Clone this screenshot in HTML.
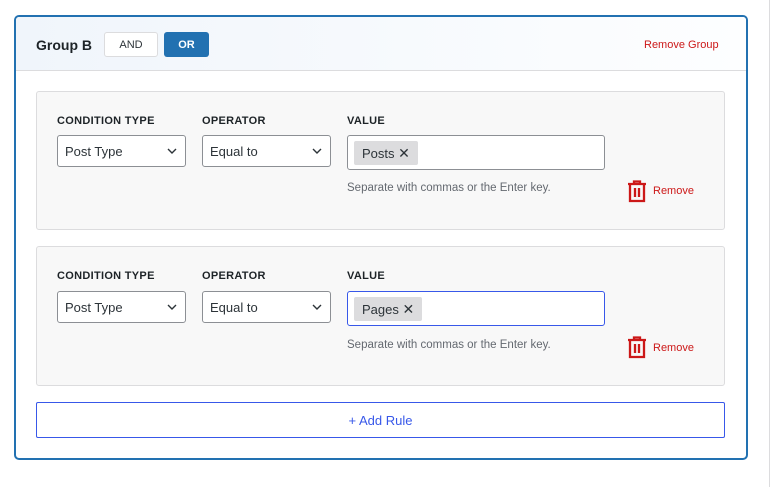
<!DOCTYPE html>
<html><head><meta charset="utf-8"><style>
*{box-sizing:border-box;margin:0;padding:0}
body{width:772px;height:487px;background:#fff;font-family:"Liberation Sans",sans-serif;position:relative;overflow:hidden}
.a{position:absolute}
.group{left:14px;top:15px;width:734px;height:445px;border:2px solid #2271b1;border-radius:5px;background:#fff;overflow:hidden}
.hdr{left:0;top:0;width:730px;height:54px;background:linear-gradient(90deg,#f0f5fb,#fdfeff);border-bottom:1px solid #dcdcde}
.rule{width:689px;background:#f8f8f8;border:1px solid #dcdcde;border-radius:3px}
.lbl{font-size:11px;font-weight:bold;color:#1d2327;letter-spacing:.3px}
.sel{width:129px;height:32px;border:1px solid #8c8f94;border-radius:3px;background:#fff;font-size:13px;color:#2c3338;padding:8px 0 0 7px}
.sel svg{position:absolute;right:8px;top:12px}
.val{width:258px;height:35px;border:1px solid #8c8f94;border-radius:3px;background:#fff}
.tag{left:6px;top:5px;height:24px;background:#dcdcde;border-radius:2px;font-size:13px;color:#2c3338;padding:4px 8px 0 8px}
.help{font-size:11.5px;color:#646970}
.rm{font-size:11px;color:#cc1818}
</style></head><body>
<div class="a" style="left:769px;top:0;width:1px;height:487px;background:#dcdcde"></div>
<div class="a group">
 <div class="a hdr">
  <div class="a" style="left:20px;top:20px;font-size:14px;font-weight:bold;color:#1d2327">Group B</div>
  <div class="a" style="left:88px;top:15px;width:54px;height:25px;border:1px solid #dcdcde;border-radius:3px;background:#fff;font-size:11px;color:#2c3338;text-align:center;padding-top:6px">AND</div>
  <div class="a" style="left:148px;top:15px;width:45px;height:25px;border-radius:3px;background:#2271b1;font-size:11px;font-weight:bold;color:#fff;text-align:center;padding-top:7px">OR</div>
  <div class="a rm" style="left:628px;top:22px">Remove Group</div>
 </div>
 <div class="a rule" style="left:20px;top:74px;height:139px">
  <div class="a lbl" style="left:20px;top:23px">CONDITION TYPE</div>
  <div class="a lbl" style="left:165px;top:23px">OPERATOR</div>
  <div class="a lbl" style="left:310px;top:23px">VALUE</div>
  <div class="a sel" style="left:20px;top:43px">Post Type<svg width="10" height="6" viewBox="0 0 10 6"><path d="M1 1l4 4 4-4" fill="none" stroke="#2c3338" stroke-width="1.4"/></svg></div>
  <div class="a sel" style="left:165px;top:43px">Equal to<svg width="10" height="6" viewBox="0 0 10 6"><path d="M1 1l4 4 4-4" fill="none" stroke="#2c3338" stroke-width="1.4"/></svg></div>
  <div class="a val" style="left:310px;top:43px"><div class="a tag">Posts <span style="font-size:14px">✕</span></div></div>
  <div class="a help" style="left:310px;top:90px">Separate with commas or the Enter key.</div>
  <svg class="a" style="left:590px;top:88px" width="20" height="23" viewBox="0 0 20 23"><path d="M7 3.5V1.5h6v2M1 4h18M3 4v17h14V4M8 8v9M12 8v9" fill="none" stroke="#cc1818" stroke-width="2.3"/></svg>
  <div class="a rm" style="left:616px;top:93px">Remove</div>
 </div>
 <div class="a rule" style="left:20px;top:229px;height:140px">
  <div class="a lbl" style="left:20px;top:23px">CONDITION TYPE</div>
  <div class="a lbl" style="left:165px;top:23px">OPERATOR</div>
  <div class="a lbl" style="left:310px;top:23px">VALUE</div>
  <div class="a sel" style="left:20px;top:44px">Post Type<svg width="10" height="6" viewBox="0 0 10 6"><path d="M1 1l4 4 4-4" fill="none" stroke="#2c3338" stroke-width="1.4"/></svg></div>
  <div class="a sel" style="left:165px;top:44px">Equal to<svg width="10" height="6" viewBox="0 0 10 6"><path d="M1 1l4 4 4-4" fill="none" stroke="#2c3338" stroke-width="1.4"/></svg></div>
  <div class="a val" style="left:310px;top:44px;border:1.5px solid #3858e9"><div class="a tag">Pages <span style="font-size:14px">✕</span></div></div>
  <div class="a help" style="left:310px;top:92px">Separate with commas or the Enter key.</div>
  <svg class="a" style="left:590px;top:89px" width="20" height="23" viewBox="0 0 20 23"><path d="M7 3.5V1.5h6v2M1 4h18M3 4v17h14V4M8 8v9M12 8v9" fill="none" stroke="#cc1818" stroke-width="2.3"/></svg>
  <div class="a rm" style="left:616px;top:95px">Remove</div>
 </div>
 <div class="a" style="left:20px;top:385px;width:689px;height:36px;border:1px solid #3858e9;border-radius:2px;color:#3858e9;font-size:13px;text-align:center;padding-top:10px">+ Add Rule</div>
</div>
</body></html>
